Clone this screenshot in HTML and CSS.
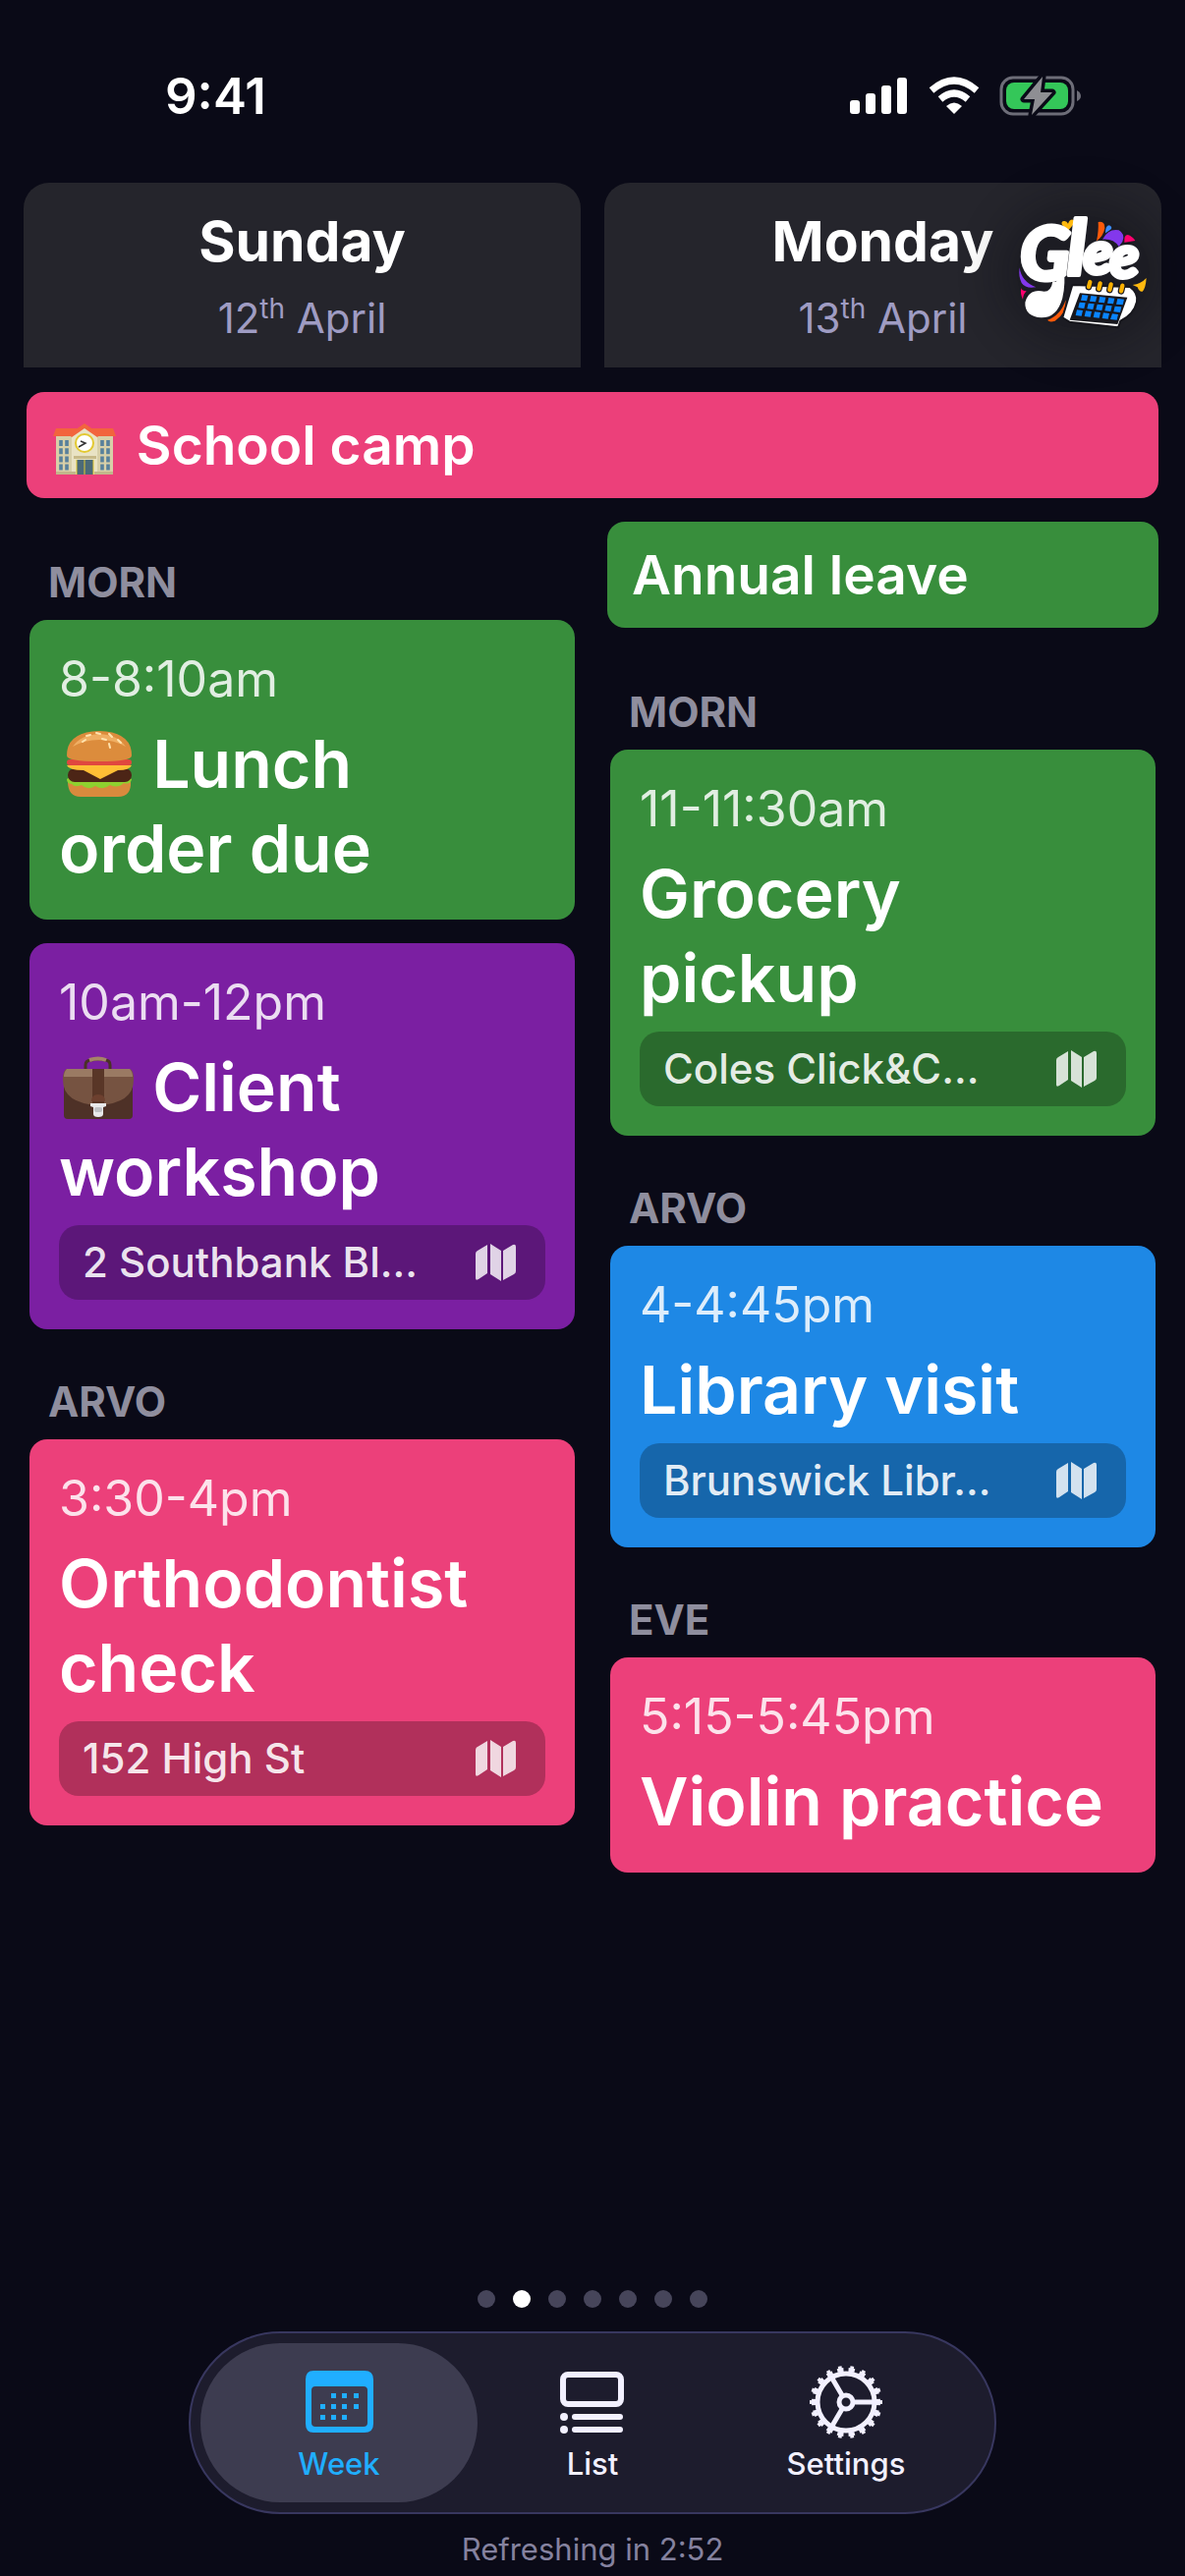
FILE: index.html
```html
<!DOCTYPE html>
<html lang="en">
<head>
<meta charset="UTF-8">
<meta name="viewport" content="width=device-width, initial-scale=1.0">
<title>Glee - Week</title>
<link rel="stylesheet" href="styles.css">
</head>
<body>
<!-- shared icons -->
<svg class="defs" aria-hidden="true">
  <symbol id="map" viewBox="0 0 42 38">
    <path d="M0 10Q0 8 2 7L12 1V30L3 36Q0 38 0 35Z"/>
    <path d="M15 0L26 7V38L15 31Z"/>
    <path d="M28 7L38 1Q41 0 41 3V28Q41 30 39 31L28 37Z"/>
  </symbol>
</svg>

<div class="status">
  <span class="clock">9:41</span>
  <svg class="status-icons" viewBox="865 77 236 42" aria-hidden="true">
    <g fill="#fff">
      <rect x="865" y="102" width="10" height="14" rx="3"/>
      <rect x="881" y="95" width="10" height="21" rx="3"/>
      <rect x="897" y="87" width="10" height="29" rx="3"/>
      <rect x="913" y="79" width="10" height="37" rx="3"/>
      <path d="M971 116L963 108Q971 101 979 108Z"/>
    </g>
    <g fill="none" stroke="#fff" stroke-width="7">
      <path d="M957 101Q971 89 985 101"/>
      <path d="M948 92Q971 72 994 92"/>
    </g>
    <rect x="1019" y="79" width="73" height="37" rx="12" fill="none" stroke="#6d6d78" stroke-width="3"/>
    <path d="M1096 92Q1100 94 1100 98Q1100 101 1096 103Z" fill="#6d6d78"/>
    <rect x="1024" y="84" width="63" height="27" rx="8" fill="#34c759"/>
    <path d="M1061 78L1042 101H1053L1050 117L1071 94H1059Z" fill="#8e8e93" stroke="#0a0a17" stroke-width="7" stroke-linejoin="round" paint-order="stroke"/>
  </svg>
</div>

<header class="days">
  <div class="day">
    <h2>Sunday</h2>
    <p>12<sup>th</sup> April</p>
  </div>
  <div class="day">
    <h2>Monday</h2>
    <p>13<sup>th</sup> April</p>
  </div>
  <a class="logo" href="#" aria-label="Glee home">
    <svg viewBox="75 90 405 345">
      <path d="M83 247Q88 290 133 307Q102 313 89 294Q79 274 83 247Z" fill="#8338ec"/>
      <path d="M88 309Q84 326 93 344Q94 328 104 319Q88 318 88 309Z" fill="#ff006e"/>
      <path d="M224 346Q226 388 191 410Q174 416 168 407Q207 395 224 346Z" fill="#ff5a0a"/>
      <path d="M470 279Q468 310 458 320Q448 322 443 307L428 300Q453 297 470 279Z" fill="#ffb90f"/>
      <path d="M231 134L213 117Q208 106 219 105Q227 104 231 113Q236 99 246 101Q254 105 249 113Z" fill="#ffb90f"/>
      <path d="M323 108Q344 103 343 127Q339 151 318 166Q325 134 323 108Z" fill="#ff5a0a"/>
      <path d="M345 142Q345 118 357 118Q367 123 362 130Q355 136 345 142Z" fill="#3b8cff"/>
      <path d="M336 161Q354 127 386 133Q407 145 397 168L386 183Q370 158 336 161Z" fill="#8338ec"/>
      <path d="M403 170Q401 147 413 147Q427 151 436 165Z" fill="#ff006e"/>
      <!-- tail under the wordmark -->
      <path d="M206 235Q212 300 202 338Q188 388 150 388Q110 386 112 355Q120 322 155 332Q190 334 196 290" fill="#fff" stroke="#fff" stroke-width="24" stroke-linejoin="round"/>
      <text class="wordmark" x="84" y="286"><tspan font-size="226">G</tspan><tspan font-size="232" dx="-8" dy="-16">l</tspan><tspan font-size="184" dx="-8" dy="-2">e</tspan><tspan font-size="184" dx="-10" dy="12">e</tspan></text>
      <!-- desk calendar -->
      <path d="M244 300L420 306Q446 325 441 352Q432 391 391 410L384 430L235 413L214 400Z" fill="#fff" stroke="#17171d" stroke-width="6"/>
      <path d="M267 325L412 338L382 420L236 407Z" fill="#17171d"/>
      <g fill="#0a84ff">
        <path d="M274 330l18 2-4 17-18-2zM301 333l18 2-4 17-18-2zM328 336l18 2-4 17-18-2zM355 339l18 2-4 17-18-2zM382 342l20 2-4 17-20-2z"/>
        <path d="M266 353l18 2-4 17-18-2zM293 356l18 2-4 17-18-2zM320 359l18 2-4 17-18-2zM347 362l18 2-4 17-18-2zM374 365l20 2-4 17-20-2z"/>
        <path d="M258 376l18 2-4 17-18-2zM285 379l18 2-4 17-18-2zM312 382l18 2-4 17-18-2zM339 385l18 2-4 17-18-2zM366 388l18 2-4 17-20-2z"/>
      </g>
      <g stroke="#17171d" stroke-width="20" stroke-linecap="round"><path d="M298 291L294 306M329 295L325 312M362 298L358 315M397 302L393 319"/></g>
      <g stroke="#fbb000" stroke-width="13" stroke-linecap="round"><path d="M298 291L294 306M329 295L325 312M362 298L358 315M397 302L393 319"/></g>
    </svg>
  </a>
</header>

<main>
  <div class="allday pink">
    <svg class="emoji-sm" viewBox="0 0 68 56" role="img" aria-label="School">
      <rect x="5" y="10" width="58" height="42" fill="#d8d0a8"/>
      <path d="M5 5H63L66 13H2Z" fill="#f2643d"/>
      <path d="M21 52V12L34 3L47 12V52Z" fill="#e9e3c4"/>
      <path d="M34 0L50 11L47 14L34 5L21 14L18 11Z" fill="#f2643d"/>
      <circle cx="34" cy="20" r="9" fill="#fff" stroke="#e3c931" stroke-width="2"/>
      <path d="M28 24L35 20L30 18" fill="none" stroke="#333" stroke-width="1.5"/>
      <path d="M23 33H46V36H23Z" fill="#c7ba89"/>
      <rect x="26" y="37" width="17" height="15" fill="#4b6a78"/>
      <path d="M26 52V37M34 37V52M43 37V52" stroke="#e3c931"/>
      <path d="M10 16V48M16 16V48M52 16V48M58 16V48" stroke="#57809c" stroke-width="3.6" stroke-dasharray="6 2.2" stroke-dashoffset="-1"/>
      <path d="M5 49H25V52H5ZM44 49H63V52H44Z" fill="#c2b78b"/>
    </svg>
    School camp
  </div>

  <div class="columns">
    <section class="column">
      <h3>MORN</h3>
      <article class="event green">
        <time>8-8:10am</time>
        <h4>
          <svg class="emoji" viewBox="0 0 76 72" role="img" aria-label="Burger">
            <path d="M9 53Q38 60 73 53Q74 69 60 69H22Q9 69 9 53Z" fill="#d98a3d"/>
            <path d="M8 51Q12 46 40 49Q68 46 74 51Q73 57 66 55Q60 61 52 57Q45 63 37 58Q29 63 23 57Q16 60 13 56Q8 56 8 51Z" fill="#8ed12f"/>
            <rect x="9" y="40" width="65" height="14" rx="7" fill="#4c2516"/>
            <path d="M8 37Q41 31 74 37Q72 42 60 42L42 51L25 42Q10 42 8 37Z" fill="#ffbf35"/>
            <rect x="8" y="31" width="66" height="6" rx="3" fill="#e0473f"/>
            <path d="M8 27Q8 3 41 2Q74 3 74 27Q74 33 41 33Q8 33 8 27Z" fill="#dc8c3c"/>
            <path d="M14 18Q22 6 41 5Q60 6 68 18Q56 11 41 11Q26 11 14 18Z" fill="#efae63"/>
            <path d="M28 7l4-1M24 13l3-2M38 4l4 1M44 10l4 1M51 5l3 3M51 15l1 4M60 11l3 3" stroke="#ffe3ae" stroke-width="2" stroke-linecap="round"/>
          </svg>
          Lunch<br>order due
        </h4>
      </article>
      <article class="event purple">
        <time>10am-12pm</time>
        <h4>
          <svg class="emoji" viewBox="0 0 76 72" role="img" aria-label="Briefcase">
            <path d="M27 18V13Q27 8 33 8Q40 6 47 8Q52 8 52 13V18" fill="none" stroke="#4a3226" stroke-width="3"/>
            <path d="M31 8Q40 5 48 8" fill="none" stroke="#a58467" stroke-width="4"/>
            <rect x="5" y="20" width="70" height="48" rx="4" fill="#4e3127"/>
            <path d="M8 17H72Q76 18 76 28Q76 52 40 54Q4 52 4 28Q4 18 8 17Z" fill="#765341"/>
            <path d="M8 17H72Q75 20 75 25H5Q5 20 8 17Z" fill="#9a7a63"/>
            <path d="M34 17H46V54H34Z" fill="#593627"/>
            <path d="M33 50Q33 43 40 43Q47 43 47 50Z" fill="#6d402f"/>
            <path d="M32 52H48V55L45 56V63Q45 66 40 66Q35 66 35 63V56L32 55Z" fill="#e9e9ea"/>
            <rect x="36" y="56" width="8" height="5" rx="2" fill="#bfc1c4"/>
          </svg>
          Client workshop
        </h4>
        <a class="place" href="#"><span>2 Southbank Bl...</span><svg><use href="#map"/></svg></a>
      </article>

      <h3>ARVO</h3>
      <article class="event pink">
        <time>3:30-4pm</time>
        <h4>Orthodontist check</h4>
        <a class="place" href="#"><span>152 High St</span><svg><use href="#map"/></svg></a>
      </article>
    </section>

    <section class="column">
      <div class="allday green">Annual leave</div>
      <h3>MORN</h3>
      <article class="event green">
        <time>11-11:30am</time>
        <h4>Grocery pickup</h4>
        <a class="place" href="#"><span>Coles Click&amp;C...</span><svg><use href="#map"/></svg></a>
      </article>

      <h3>ARVO</h3>
      <article class="event blue">
        <time>4-4:45pm</time>
        <h4>Library visit</h4>
        <a class="place" href="#"><span>Brunswick Libr...</span><svg><use href="#map"/></svg></a>
      </article>

      <h3>EVE</h3>
      <article class="event pink">
        <time>5:15-5:45pm</time>
        <h4>Violin practice</h4>
      </article>
    </section>
  </div>
</main>

<footer>
  <div class="dots">
    <button aria-label="Page 1"></button>
    <button aria-label="Page 2" class="on"></button>
    <button aria-label="Page 3"></button>
    <button aria-label="Page 4"></button>
    <button aria-label="Page 5"></button>
    <button aria-label="Page 6"></button>
    <button aria-label="Page 7"></button>
  </div>
  <nav class="tabs">
    <button class="tab active">
      <svg viewBox="0 0 76 76">
        <path fill-rule="evenodd" d="M12 6H64Q73 6 73 15V60Q73 69 64 69H12Q4 69 4 60V15Q4 6 12 6ZM14 22Q10 22 10 26V59Q10 63 14 63H63Q67 63 67 59V26Q67 22 63 22Z"/>
        <path d="M30 29h5v5h-5zM41 29h5v5h-5zM53 29h5v5h-5zM19 40h5v5h-5zM30 40h5v5h-5zM41 40h5v5h-5zM53 40h5v5h-5zM19 51h5v5h-5zM30 51h5v5h-5zM41 51h5v5h-5z"/>
      </svg>
      Week
    </button>
    <button class="tab">
      <svg viewBox="0 0 76 76">
        <rect x="8" y="10" width="59" height="30" rx="5" fill="none" stroke="currentColor" stroke-width="6"/>
        <circle cx="9" cy="53" r="4"/>
        <circle cx="9" cy="66" r="4"/>
        <rect x="17" y="50" width="52" height="6" rx="3"/>
        <rect x="17" y="63" width="52" height="6" rx="3"/>
      </svg>
      List
    </button>
    <button class="tab">
      <svg viewBox="0 0 76 76" fill="none" stroke="currentColor">
        <circle cx="38" cy="38" r="29" stroke-width="5"/>
        <circle cx="38" cy="38" r="33" stroke-width="4" pathLength="360" stroke-dasharray="11 9" stroke-dashoffset="5.5"/>
        <circle cx="38" cy="38" r="35" stroke-width="4" pathLength="360" stroke-dasharray="6 14" stroke-dashoffset="3"/>
        <circle cx="38" cy="38" r="7" stroke-width="5"/>
        <path d="M46 38H66M34 31L24 14M34 45L24 62" stroke-width="5"/>
      </svg>
      Settings
    </button>
  </nav>
  <p class="refresh">Refreshing in 2:52</p>
</footer>
</body>
</html>
```

FILE: styles.css
```css
* {
  box-sizing: border-box;
}

body {
  margin: 0;
  min-height: 100vh;
  display: flex;
  flex-direction: column;
  background: #0a0a17;
  color: #fff;
  font-family: Inter, 'Liberation Sans', sans-serif;
}

h2, h3, h4, p {
  margin: 0;
}

a {
  color: inherit;
  text-decoration: none;
}

button {
  padding: 0;
  border: none;
  background: none;
  font: inherit;
  color: inherit;
  cursor: pointer;
}

.defs {
  display: none;
}

/* Status bar */
.status {
  display: flex;
  justify-content: space-between;
  align-items: center;
  padding: 67px 105px 57px 168px;
}

.clock {
  font-size: 51px;
  line-height: 62px;
  font-weight: 600;
}

.status-icons {
  width: 236px;
  height: 42px;
}

/* Day headers */
.days {
  position: relative;
  display: grid;
  grid-template-columns: 1fr 1fr;
  gap: 24px;
  padding: 0 24px;
}

.day {
  padding: 25px 0 25px;
  border-radius: 26px 26px 0 0;
  background: #25252c;
  text-align: center;
}

.day h2 {
  font-size: 57px;
  line-height: 70px;
  font-weight: 700;
}

.day p {
  margin-top: 18px;
  font-size: 42px;
  line-height: 50px;
  color: #9f9cc3;
}

.day sup {
  font-size: 28px;
  line-height: 0;
}

.logo {
  position: absolute;
  top: 34px;
  right: 36px;
  width: 135px;
  height: 115px;
  border-radius: 50%;
  background: rgba(10, 10, 15, 0.3);
  box-shadow: 0 0 40px 20px rgba(10, 10, 15, 0.3);
}

.logo svg {
  display: block;
  width: 100%;
  height: 100%;
  overflow: visible;
}

.wordmark {
  font-family: Lato, sans-serif;
  font-weight: 900;
  font-style: italic;
  fill: #fff;
  stroke: #fff;
  stroke-width: 12px;
  stroke-linejoin: round;
}

/* Events */
main {
  padding: 25px 24px 0;
}

.columns {
  display: grid;
  grid-template-columns: 1fr 1fr;
  gap: 24px;
}

.allday {
  margin: 0 3px;
  padding: 20px 25px;
  border-radius: 18px;
  font-size: 55px;
  line-height: 68px;
  font-weight: 600;
}

.column .allday {
  margin-top: 24px;
}

.column h3 {
  margin: 49px 25px 13px;
  font-size: 42px;
  line-height: 50px;
  font-weight: 700;
  color: #8f8e9e;
}

.column h3:first-child,
.column .allday + h3 {
  margin-top: 61px;
}

.event {
  margin: 0 6px 24px;
  padding: 30px;
  border-radius: 18px;
}

.event time {
  display: block;
  margin-bottom: 12px;
  font-size: 50px;
  line-height: 61px;
  color: rgba(255, 255, 255, 0.85);
}

.event h4 {
  font-size: 68px;
  line-height: 86px;
  font-weight: 600;
}

.emoji {
  width: 76px;
  height: 72px;
  margin-right: 2px;
  vertical-align: -12px;
}

.emoji-sm {
  width: 68px;
  height: 56px;
  margin-right: 5px;
  vertical-align: -14px;
}

.place {
  display: flex;
  justify-content: space-between;
  align-items: center;
  margin-top: 12px;
  padding: 13px 29px 13px 24px;
  border-radius: 20px;
  background: rgba(0, 0, 0, 0.25);
  font-size: 42px;
  line-height: 50px;
  font-weight: 500;
  color: rgba(255, 255, 255, 0.9);
}

.place svg {
  width: 42px;
  height: 38px;
  fill: currentColor;
  opacity: 0.9;
}

.green {
  background: #388e3c;
}

.purple {
  background: #7b1fa2;
}

.pink {
  background: #ec407a;
}

.blue {
  background: #1e88e5;
}

/* Bottom bar */
footer {
  margin-top: auto;
  padding-bottom: 9px;
}

.dots {
  display: flex;
  justify-content: center;
  gap: 18px;
}

.dots button {
  width: 18px;
  height: 18px;
  border-radius: 50%;
  background: #46455a;
}

.dots .on {
  background: #fff;
}

.tabs {
  display: flex;
  width: fit-content;
  margin: 24px auto 18px;
  padding: 10px 22px;
  border: 2px solid #38375f;
  border-radius: 93px;
  background: #1d1c2d;
}

.tab {
  width: 282px;
  height: 162px;
  margin: 0 -12px;
  border-radius: 81px;
  display: flex;
  flex-direction: column;
  align-items: center;
  padding-top: 22px;
  font-size: 31px;
  line-height: 36px;
  font-weight: 500;
  color: #f2f0ff;
}

.tab svg {
  width: 76px;
  height: 76px;
  margin-bottom: 7px;
}

.tab svg:not([fill]) {
  fill: currentColor;
}

.tab.active {
  background: #3d3c50;
  color: #20aeff;
}

.refresh {
  font-size: 31px;
  line-height: 36px;
  text-align: center;
  color: #85829f;
}
```
